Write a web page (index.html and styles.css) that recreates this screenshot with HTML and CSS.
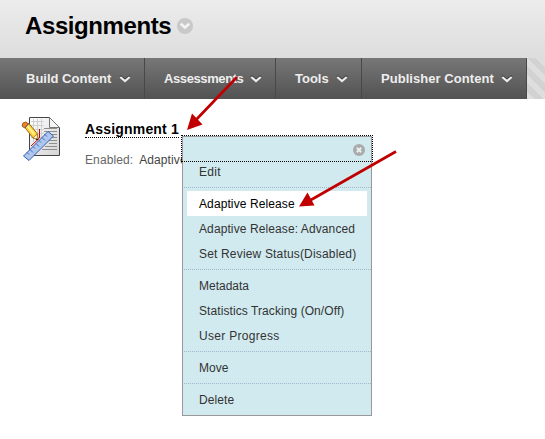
FILE: index.html
```html
<!DOCTYPE html>
<html lang="en">
<head>
<meta charset="utf-8">
<title>Assignments</title>
<link rel="stylesheet" href="styles.css">
</head>
<body>
<header class="page-header">
  <h1>Assignments</h1>
  <svg class="title-toggle" width="16" height="16" viewBox="0 0 16 16"><circle cx="8" cy="8" r="8" fill="#c9c9c9"/><path d="M3.7 5.7 8 9.5l4.3-3.8" fill="none" stroke="#f4f4f4" stroke-width="2.5"/></svg>
</header>
<nav class="action-bar">
  <a class="action build">Build Content<svg width="12" height="8" viewBox="0 0 12 8"><path class="shade" d="M1.3 1 6 5l4.7-4"/><path d="M1.3 2 6 6l4.7-4"/></svg></a>
  <a class="action assess">Assessments<svg width="12" height="8" viewBox="0 0 12 8"><path class="shade" d="M1.3 1 6 5l4.7-4"/><path d="M1.3 2 6 6l4.7-4"/></svg></a>
  <a class="action tools">Tools<svg width="12" height="8" viewBox="0 0 12 8"><path class="shade" d="M1.3 1 6 5l4.7-4"/><path d="M1.3 2 6 6l4.7-4"/></svg></a>
  <a class="action publisher">Publisher Content<svg width="12" height="8" viewBox="0 0 12 8"><path class="shade" d="M1.3 1 6 5l4.7-4"/><path d="M1.3 2 6 6l4.7-4"/></svg></a>
</nav>
<main class="content">
  <svg class="item-icon" width="42" height="48" viewBox="0 0 42 48">
    <defs><linearGradient id="paper" x1="0" y1="0" x2="1" y2="1"><stop offset="0" stop-color="#fff"/><stop offset="1" stop-color="#d4d4d4"/></linearGradient></defs>
    <path d="M9.500 3.500h20l10 10v28h-30z" fill="url(#paper)" stroke="#444"/>
    <path d="M11 7.500h13M11 11.500h13M11 15.500h13M11 19.500h13M11 23.500h13M13.500 5v23M17.500 5v23M21.500 5v23" stroke="#d0d0d0" fill="none"/>
    <path d="M29.500 3.500v10h10z" fill="#f5f5f5" stroke="#777"/>
    <path d="M24 14.500h13M24 17.500h13M24 20.500h13M29 23.500h8M29 26.500h8M29 29.500h8M25 32.500h12M22 35.500h15" stroke="#8e8e8e" fill="none"/>
    <path d="m3.500 42 24.500-24.500 5.500 4.500L9 46.500z" fill="#afc6ed" stroke="#365fac"/>
    <path d="m7 38.500 2 2m1-5 3 3m0-6 2 2m1-5 3 3m0-6 2 2m1-5 3 3m0-6 2 2" stroke="#456fbd"/>
    <path d="m4.500 13 4-4 9 11 .5 5.500-5-1.500z" fill="#ffd43b" stroke="#9b6a15"/>
    <path d="m7.500 12 7 8.500" stroke="#fff18b" stroke-width="2"/>
    <path d="m2 12 1-3 3-1 2.500 2-4 4z" fill="#ef8425" stroke="#ad571b"/>
    <path d="m4.500 14 4-4.500" stroke="#56618b"/>
    <path d="m13 24 4-4 1 5.500z" fill="#ffe7b2" stroke="#8c6521" stroke-width=".6"/>
    <path d="M11 32 19.500 24v-9" fill="none" stroke="#c00"/>
    <path d="m16 24.500 2 .5v1h-2z" fill="#222"/>
  </svg>
  <section class="item">
    <h2>Assignment 1</h2>
    <p><span>Enabled:</span><span class="value">Adaptive</span></p>
  </section>
</main>
<div class="context-menu">
  <div class="menu-head"><svg width="12" height="12" viewBox="0 0 12 12"><circle cx="6" cy="6" r="6" fill="#aaa"/><path d="m3.800 3.800 4.400 4.400m0-4.400-4.400 4.400" stroke="#e4f2f4" stroke-width="2"/></svg></div>
  <ul class="first"><li><span class="wide">Edit</span></li></ul>
  <ul><li class="active"><span class="normal">Adaptive Release</span></li><li><span class="normal">Adaptive Release: Advanced</span></li><li><span class="status">Set Review Status(Disabled)</span></li></ul>
  <ul><li><span>Metadata</span></li><li><span class="tracking">Statistics Tracking (On/Off)</span></li><li><span class="wide">User Progress</span></li></ul>
  <ul><li><span>Move</span></li></ul>
  <ul><li><span class="normal">Delete</span></li></ul>
</div>
<svg class="arrows" width="545" height="439" viewBox="0 0 545 439">
  <g stroke="#c00000" stroke-width="2.700" fill="none"><path d="M237 77 193 123M396 151.500 309 201"/></g>
  <g fill="#c00000"><path d="m187 130 5-16.500 10.500 11zM299 206.500l8.500-14 7 13z"/></g>
</svg>
</body>
</html>
```

FILE: styles.css
```css
* { box-sizing: border-box; }
body { margin: 0; width: 545px; height: 439px; overflow: hidden; position: relative; background: #fff; font: 12px/15px "Liberation Sans", Arial, sans-serif; color: #333; }
h1, h2, p, ul { margin: 0; padding: 0; }
.page-header { height: 58px; display: flex; padding: 0 0 0 25px; background: linear-gradient(#ececec, #dddddd); }
h1 { width: 152px; font-size: 24px; line-height: 52px; letter-spacing: -.4px; color: #000; white-space: nowrap; }
.title-toggle { margin-top: 18px; }
.action-bar { height: 41px; display: flex; background: repeating-linear-gradient(45deg, #dedede 0 6px, #d2d2d2 6px 12px); }
.action { height: 41px; display: flex; align-items: center; justify-content: space-between; padding: 0 13px 0 19px; border-right: 1px solid #484848; background: linear-gradient(#777, #525252); color: #eee; font-size: 13px; font-weight: bold; white-space: nowrap; }
.action svg { margin-top: 0; }
.action path { fill: none; stroke: #eee; stroke-width: 2.2; }
.action .shade { stroke: #333; }
.build { width: 145px; padding-left: 26px; }
.assess { width: 131px; letter-spacing: -.4px; }
.tools { width: 86px; }
.publisher { width: 165px; letter-spacing: .05px; }
.content { display: flex; padding: 15px 0 0 20px; }
.item { margin-left: 23px; padding-top: 6px; }
h2 { width: 94px; height: 18px; border-bottom: 1px dotted #000; font-size: 14px; line-height: 18px; letter-spacing: .18px; color: #000; white-space: nowrap; }
.item p { margin-top: 15px; color: #666; letter-spacing: .1px; white-space: nowrap; }
.value { margin-left: 6px; color: #444; }
.context-menu { position: absolute; left: 182px; top: 136px; width: 190px; height: 280px; border: 1px solid #999; background: #d1eaef; }
.menu-head { width: 192px; height: 27px; margin: -2px 0 0 -2px; padding: 8px 7px 0 0; border: 1px dotted #000; display: flex; justify-content: flex-end; }
ul { list-style: none; margin-left: 1px; padding: 3px 4px 3px 3px; border-top: 1px dotted #a3b6cc; }
.first { margin-top: -3px; padding-top: 0; border: 0; }
li { height: 25px; padding: 1px 0 0 12px; line-height: 25px; white-space: nowrap; }
.normal { letter-spacing: .1px; }
.status { letter-spacing: .17px; }
.tracking { letter-spacing: .08px; }
.wide { letter-spacing: .3px; }
.active { background: #fff; color: #000; }
.arrows { position: absolute; left: 0; top: 0; }
```
